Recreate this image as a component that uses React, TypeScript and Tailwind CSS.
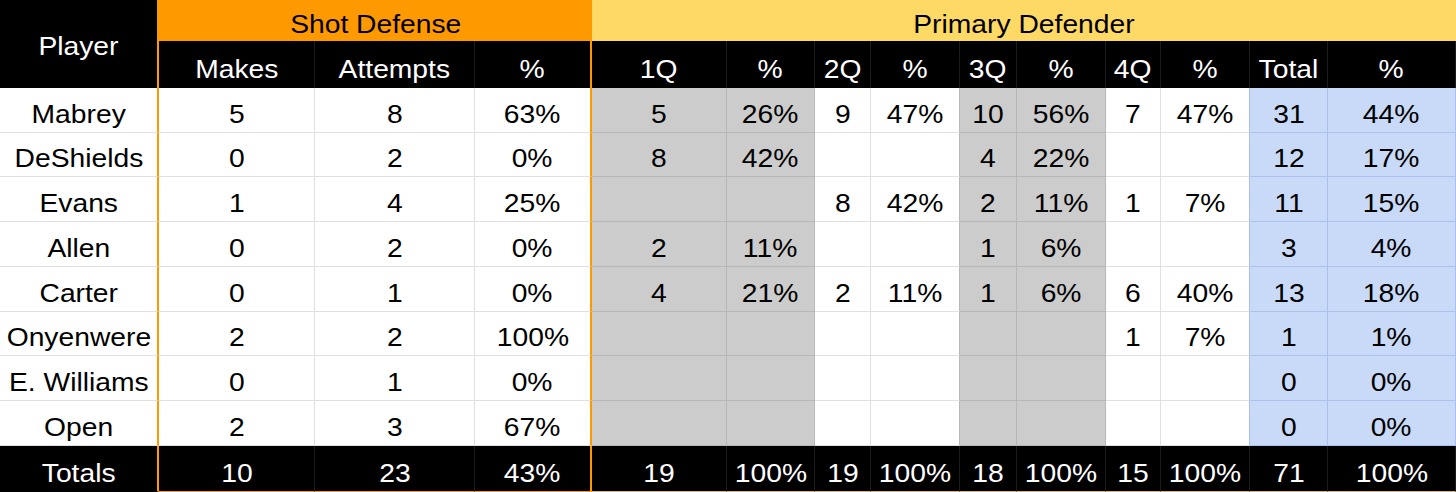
type Shade = "white" | "gray" | "blue";

const columns: Array<{ label: string; shade: Shade }> = [
  { label: "Makes", shade: "white" },
  { label: "Attempts", shade: "white" },
  { label: "%", shade: "white" },
  { label: "1Q", shade: "gray" },
  { label: "%", shade: "gray" },
  { label: "2Q", shade: "white" },
  { label: "%", shade: "white" },
  { label: "3Q", shade: "gray" },
  { label: "%", shade: "gray" },
  { label: "4Q", shade: "white" },
  { label: "%", shade: "white" },
  { label: "Total", shade: "blue" },
  { label: "%", shade: "blue" }
];

const rows: Array<{ player: string; values: string[] }> = [
  { player: "Mabrey", values: ["5", "8", "63%", "5", "26%", "9", "47%", "10", "56%", "7", "47%", "31", "44%"] },
  { player: "DeShields", values: ["0", "2", "0%", "8", "42%", "", "", "4", "22%", "", "", "12", "17%"] },
  { player: "Evans", values: ["1", "4", "25%", "", "", "8", "42%", "2", "11%", "1", "7%", "11", "15%"] },
  { player: "Allen", values: ["0", "2", "0%", "2", "11%", "", "", "1", "6%", "", "", "3", "4%"] },
  { player: "Carter", values: ["0", "1", "0%", "4", "21%", "2", "11%", "1", "6%", "6", "40%", "13", "18%"] },
  { player: "Onyenwere", values: ["2", "2", "100%", "", "", "", "", "", "", "1", "7%", "1", "1%"] },
  { player: "E. Williams", values: ["0", "1", "0%", "", "", "", "", "", "", "", "", "0", "0%"] },
  { player: "Open", values: ["2", "3", "67%", "", "", "", "", "", "", "", "", "0", "0%"] }
];

const totals = ["10", "23", "43%", "19", "100%", "19", "100%", "18", "100%", "15", "100%", "71", "100%"];

const bgClass: Record<Shade, string> = {
  white: "bg-white",
  gray: "bg-[#cccccc]",
  blue: "bg-[#c9daf8]"
};

// right border takes the darker tint when either side of the line is shaded
function rightBorder(i: number) {
  if (i === 2) return "border-r-2 border-r-[#ff9900]";
  const here = columns[i].shade;
  const next = columns[i + 1]?.shade;
  if (here === "blue" || next === "blue") return "border-r border-r-[#a9c1ec]";
  if (here === "gray" || next === "gray") return "border-r border-r-[#b7b7b7]";
  return "border-r border-r-[#e0e0e0]";
}

function bottomBorder(shade: Shade) {
  if (shade === "blue") return "border-b border-b-[#a9c1ec]";
  if (shade === "gray") return "border-b border-b-[#b7b7b7]";
  return "border-b border-b-[#e0e0e0]";
}

// the sheet export is a little stretched sideways
function Txt({ children }: { children: string }) {
  return <span className="inline-block whitespace-nowrap scale-x-[1.13]">{children}</span>;
}

export default function App() {
  return (
    <div className="w-[1456px] h-[492px] overflow-hidden bg-white text-black text-[25px] leading-[28px] [font-family:'Liberation_Sans',Arial,sans-serif]">
      <div className="grid grid-cols-[159px_156px_160px_117px_135px_88px_56px_89px_57px_89px_55px_89px_78px_128px] grid-rows-[41px_47px_45px_44px_45px_45px_45px_44px_45px_45px_46px]">
        <div className="row-span-2 flex items-end justify-center pb-[28px] bg-black text-white border-r-2 border-r-[#ff9900]">
          <Txt>Player</Txt>
        </div>
        <div className="col-span-3 flex items-end justify-center pb-[3px] bg-[#ff9900]">
          <Txt>Shot Defense</Txt>
        </div>
        <div className="col-span-10 flex items-end justify-center pb-[3px] bg-[#ffd966]">
          <Txt>Primary Defender</Txt>
        </div>

        {columns.map((col, i) => (
          <div
            key={`h-${i}`}
            className={`flex items-end justify-center pb-[5px] bg-black text-white ${
              i === 2 ? "border-r-2 border-r-[#ff9900]" : "border-r border-r-[#1c1c1c]"
            }`}
          >
            <Txt>{col.label}</Txt>
          </div>
        ))}

        {rows.map((row) => (
          <div key={row.player} className="contents">
            <div className="flex items-end justify-center pb-[4px] bg-white border-r-2 border-r-[#ff9900] border-b border-b-[#e0e0e0]">
              <Txt>{row.player}</Txt>
            </div>
            {row.values.map((v, i) => (
              <div
                key={i}
                className={`flex items-end justify-center pb-[4px] ${bgClass[columns[i].shade]} ${rightBorder(i)} ${bottomBorder(columns[i].shade)}`}
              >
                <Txt>{v}</Txt>
              </div>
            ))}
          </div>
        ))}

        <div className="flex items-end justify-center pb-[4px] bg-black text-white border-r-2 border-r-[#ff9900] border-b border-b-black">
          <Txt>Totals</Txt>
        </div>
        {totals.map((v, i) => (
          <div
            key={`t-${i}`}
            className={`flex items-end justify-center pb-[4px] bg-black text-white ${
              i === 2 ? "border-r-2 border-r-[#ff9900]" : "border-r border-r-[#1c1c1c]"
            } ${i < 3 ? "border-b border-b-[#ff9900]" : "border-b border-b-[#d9b860]"}`}
          >
            <Txt>{v}</Txt>
          </div>
        ))}
      </div>
    </div>
  );
}
